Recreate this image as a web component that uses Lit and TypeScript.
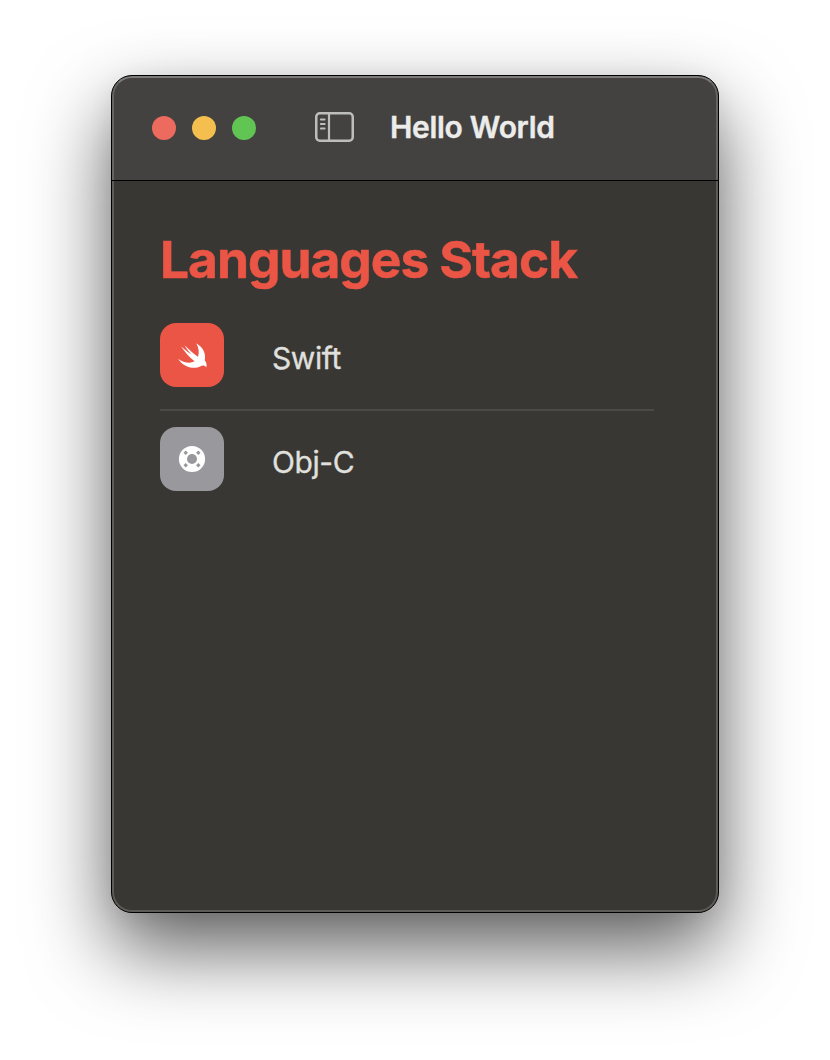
import { LitElement, html, css, svg } from "lit";
import { customElement, property } from "lit/decorators.js";

const swift = svg`<svg width="64" height="64" viewBox="0 0 64 64" fill="#fff">
<path d="M36.2 20.2C43.4 24.4 46.2 31 44.7 37.2C47 40.2 46.8 42.3 46.2 44.4C44.7 41.8 42.2 42.2 40.6 43.2C33.4 47 23.4 44.2 18 35.7C23.6 39.6 30 40.9 34.6 38.3C29.2 34.1 24.5 28.4 21 23.4C24.8 26.6 28.8 29.8 31.3 31.3C28.4 28.2 26.2 25.2 24.5 22.3C29.2 26.9 34 31 38 33.8C39.4 29.4 38.9 25 36.2 20.2Z"/></svg>`;

const ring = svg`<svg width="64" height="64" viewBox="0 0 64 64">
<circle cx="32" cy="32" r="13.1" fill="#fff"/><circle cx="32" cy="32" r="5" fill="#98989d"/>
<g fill="#98989d"><rect x="-1.6" y="-1.6" width="3.2" height="3.2" transform="translate(25.7 25.7) rotate(45)"/>
<rect x="-1.6" y="-1.6" width="3.2" height="3.2" transform="translate(38.3 25.7) rotate(45)"/>
<rect x="-1.6" y="-1.6" width="3.2" height="3.2" transform="translate(25.7 38.3) rotate(45)"/>
<rect x="-1.6" y="-1.6" width="3.2" height="3.2" transform="translate(38.3 38.3) rotate(45)"/></g></svg>`;

@customElement("language-row")
class LanguageRow extends LitElement {
  @property() name = "";
  @property() kind = "swift";
  static styles = css`
    :host { display: flex; align-items: center; height: 64px; }
    .tile { width: 64px; height: 64px; border-radius: 16px; background: #98989d; }
    .swift { background: #eb5545; }
    svg { display: block; }
    .label { margin-left: 48px; padding-top: 6px; font-size: 30px; line-height: 36px; color: #e0e0df; letter-spacing: -0.4px; -webkit-text-stroke: 0.3px #e0e0df; }
  `;
  render() {
    return html`<div class="tile ${this.kind}">${this.kind === "swift" ? swift : ring}</div>
      <span class="label">${this.name}</span>`;
  }
}

@customElement("app-root")
class AppRoot extends LitElement {
  static styles = css`
    :host { display: block; box-sizing: border-box; height: 1060px; padding: 75px 111px; background: #fff; overflow: hidden; font-family: Inter, "Liberation Sans", sans-serif; }
    .window { display: flex; flex-direction: column; gap: 1px; box-sizing: border-box; width: 608px; height: 838px; border: 1px solid #000; border-radius: 21px; background: #000;
      box-shadow: 0 36px 80px rgba(0,0,0,.63), 0 4px 24px rgba(0,0,0,.06); }
    .bar { display: flex; align-items: center; box-sizing: border-box; height: 104px; padding: 0 0 2px 38px; background: #434240; border: 2px solid #646461; border-top-color: #7c7b79; border-bottom: 0; border-radius: 20px 20px 0 0; }
    .dots { display: flex; gap: 16px; }
    .dot { width: 24px; height: 24px; border-radius: 50%; }
    .close { background: #ed6a5f; }
    .min { background: #f5bf4f; }
    .zoom { background: #61c554; }
    .side { display: block; margin: 0 0 2px 59px; }
    .title { margin: 0 0 2px 36px; font-size: 30px; line-height: 36px; font-weight: 600; color: #ececeb; letter-spacing: -0.3px; white-space: nowrap; -webkit-text-stroke: 0.4px #ececeb; }
    .body { flex: 1; padding: 45px 60px 0 46px; background: #393733; border: 2px solid #5c5b58; border-top: 0; border-radius: 0 0 20px 20px; }
    h1 { margin: 0 0 31px; font-size: 51.5px; line-height: 66px; font-weight: 700; color: #eb5545; letter-spacing: -1.05px; white-space: nowrap; -webkit-text-stroke: 0.5px #eb5545; }
    .rule { width: 494px; height: 2px; margin: 22px 0 16px; background: #4c4a47; }
  `;
  render() {
    return html`<div class="window">
      <header class="bar">
        <div class="dots"><i class="dot close"></i><i class="dot min"></i><i class="dot zoom"></i></div>
        <svg class="side" width="39" height="30" viewBox="0 0 39 30" fill="none" stroke="#bdbdbb">
          <rect x="1.25" y="1.25" width="36.5" height="27.5" rx="3.5" stroke-width="2.5"/>
          <path d="M14 1.5V28.5" stroke-width="2.2"/>
          <path d="M5.8 7.5H9.7M5.8 12H9.7M5.8 16.5H9.7" stroke-width="1.8" stroke-linecap="round"/>
        </svg>
        <span class="title">Hello World</span>
      </header>
      <main class="body">
        <h1>Languages Stack</h1>
        <language-row name="Swift" kind="swift"></language-row>
        <div class="rule"></div>
        <language-row name="Obj-C" kind="objc"></language-row>
      </main>
    </div>`;
  }
}
